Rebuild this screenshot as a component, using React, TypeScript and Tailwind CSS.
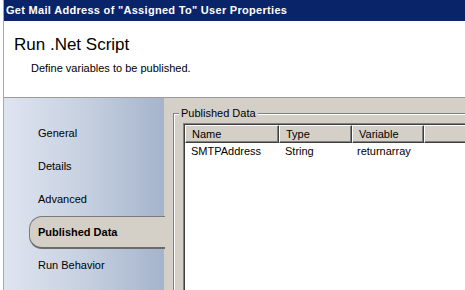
import React from "react"

const font = { fontFamily: '"Liberation Sans", Arial, sans-serif' }

const navItems = ["General", "Details", "Advanced", "Published Data", "Run Behavior"]

function NavItem({ label, active }: { label: string; active: boolean }) {
  if (active) {
    return (
      <div className="h-[33px] flex items-center pl-[25px] -mr-[1px]">
        <div className="h-full flex-1 flex items-center pl-[8px] bg-[#d4d0c8] rounded-l-[13px] border-t border-l border-[#7a7a7a] border-b-2 border-b-[#6b6b6b]">
          <span className="font-bold text-[11px] text-black">{label}</span>
        </div>
      </div>
    )
  }
  return (
    <div className="h-[33px] flex items-center pl-[34px]">
      <span className="text-[11px] text-black">{label}</span>
    </div>
  )
}

export default function App() {
  return (
    <div className="w-[465px] h-[290px] overflow-hidden flex bg-white" style={font}>
      <div className="w-[3px] shrink-0 bg-white" />
      <div className="w-[1px] shrink-0 bg-[#a8a8a8]" />

      <div className="flex-1 flex flex-col min-w-0">
        <div className="h-[21px] shrink-0 bg-[#0a246a] flex items-center pl-[2px]">
          <span className="text-white font-bold text-[11px] tracking-[0.3px] whitespace-nowrap">
            Get Mail Address of "Assigned To" User Properties
          </span>
        </div>

        <div className="h-[76px] shrink-0 bg-white pl-[10px] pt-[14px]">
          <div className="text-[17px] leading-[20px] text-black">Run .Net Script</div>
          <div className="text-[11px] leading-[14px] text-black pl-[17px] pt-[6px]">
            Define variables to be published.
          </div>
        </div>

        <div className="h-[1px] shrink-0 bg-[#9a9a9a]" />

        <div className="flex-1 flex min-h-0">
          <div className="w-[160px] shrink-0 pt-[19px] bg-gradient-to-r from-[#dfe5f0] via-[#c6d0e0] to-[#a5b4cc] relative z-10">
            {navItems.map((n) => (
              <NavItem key={n} label={n} active={n === "Published Data"} />
            ))}
          </div>

          <div className="flex-1 bg-[#d4d0c8] pl-[9px] pt-[15px] overflow-hidden">
            <div className="relative w-[320px] h-[200px] border-t border-l border-[#808080] shadow-[inset_1px_1px_0_#ffffff]">
              <span className="absolute -top-[8px] left-[5px] px-[2px] bg-[#d4d0c8] text-[11px] leading-[14px] text-black">
                Published Data
              </span>
              <div className="ml-[9px] mt-[9px] h-[200px] border-t border-l border-[#808080] bg-white">
                <div className="h-full border-t border-l border-[#404040]">
                  <div className="flex h-[18px] bg-[#d4d0c8]">
                    {[
                      ["Name", "w-[94px]"],
                      ["Type", "w-[73px]"],
                      ["Variable", "w-[72px]"],
                      ["", "w-[80px]"],
                    ].map(([t, w]) => (
                      <div
                        key={t + w}
                        className={`${w} shrink-0 h-full flex items-center pl-[6px] border-t border-l border-white border-r border-b border-r-[#404040] border-b-[#404040] shadow-[inset_-1px_-1px_0_#808080] text-[11px] text-black`}
                      >
                        {t}
                      </div>
                    ))}
                  </div>
                  <div className="flex h-[17px] items-center text-[11px] text-black">
                    <div className="w-[94px] pl-[6px]">SMTPAddress</div>
                    <div className="w-[73px] pl-[6px]">String</div>
                    <div className="w-[72px] pl-[5px]">returnarray</div>
                  </div>
                </div>
              </div>
            </div>
          </div>
        </div>
      </div>
    </div>
  )
}
